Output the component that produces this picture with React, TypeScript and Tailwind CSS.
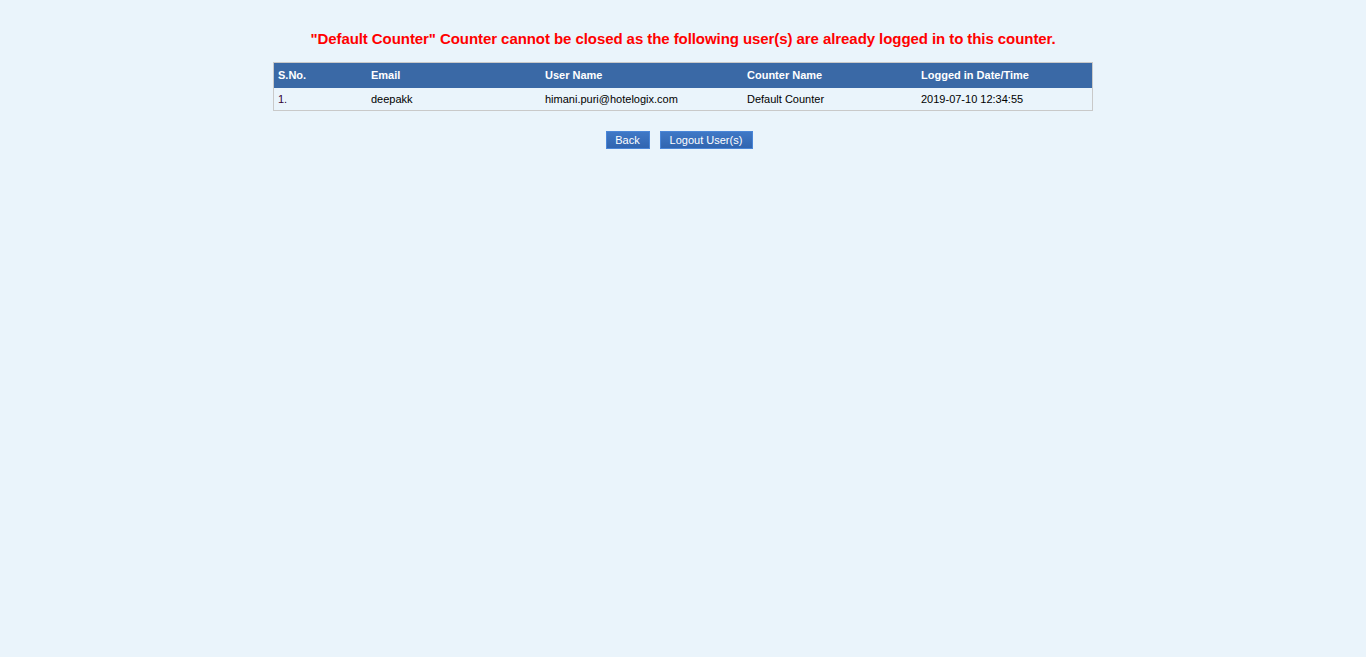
export default function App() {
  const cols = [
    { label: "S.No.", w: "w-[93px]" },
    { label: "Email", w: "w-[174px]" },
    { label: "User Name", w: "w-[202px]" },
    { label: "Counter Name", w: "w-[174px]" },
    { label: "Logged in Date/Time", w: "w-[175px]" },
  ];
  const row = ["1.", "deepakk", "himani.puri@hotelogix.com", "Default Counter", "2019-07-10 12:34:55"];

  return (
    <div className="min-h-[657px] w-full bg-[#eaf4fb] font-['Liberation_Sans',Arial,sans-serif]">
      <div className="pt-[30px] text-center text-[15px] font-bold leading-[18px] tracking-[-0.07px] text-[#ff0000]">
        "Default Counter" Counter cannot be closed as the following user(s) are already logged in to this counter.
      </div>

      <div className="mx-auto mt-[14px] w-[820px] border border-[#c9c9c9]">
        <div className="flex h-[25px] items-center bg-[#3a69a6] text-[11px] font-bold text-white">
          {cols.map((c) => (
            <div key={c.label} className={`${c.w} pl-[4px]`}>
              {c.label}
            </div>
          ))}
        </div>
        <div className="flex h-[22px] items-center text-[11px] text-black">
          {row.map((v, i) => (
            <div key={i} className={`${cols[i].w} pl-[4px] ${i === 0 ? "text-[#330033]" : ""}`}>
              {v}
            </div>
          ))}
        </div>
      </div>

      <div className="mt-[20px] flex justify-center gap-[10px] pr-[8px]">
        <button className="h-[18px] w-[44px] border border-[#4a86d8] bg-gradient-to-b from-[#3f78c6] to-[#3165b0] text-[11px] leading-none text-white">
          Back
        </button>
        <button className="h-[18px] w-[93px] border border-[#4a86d8] bg-gradient-to-b from-[#3f78c6] to-[#3165b0] text-[11px] leading-none text-white">
          Logout User(s)
        </button>
      </div>
    </div>
  );
}
